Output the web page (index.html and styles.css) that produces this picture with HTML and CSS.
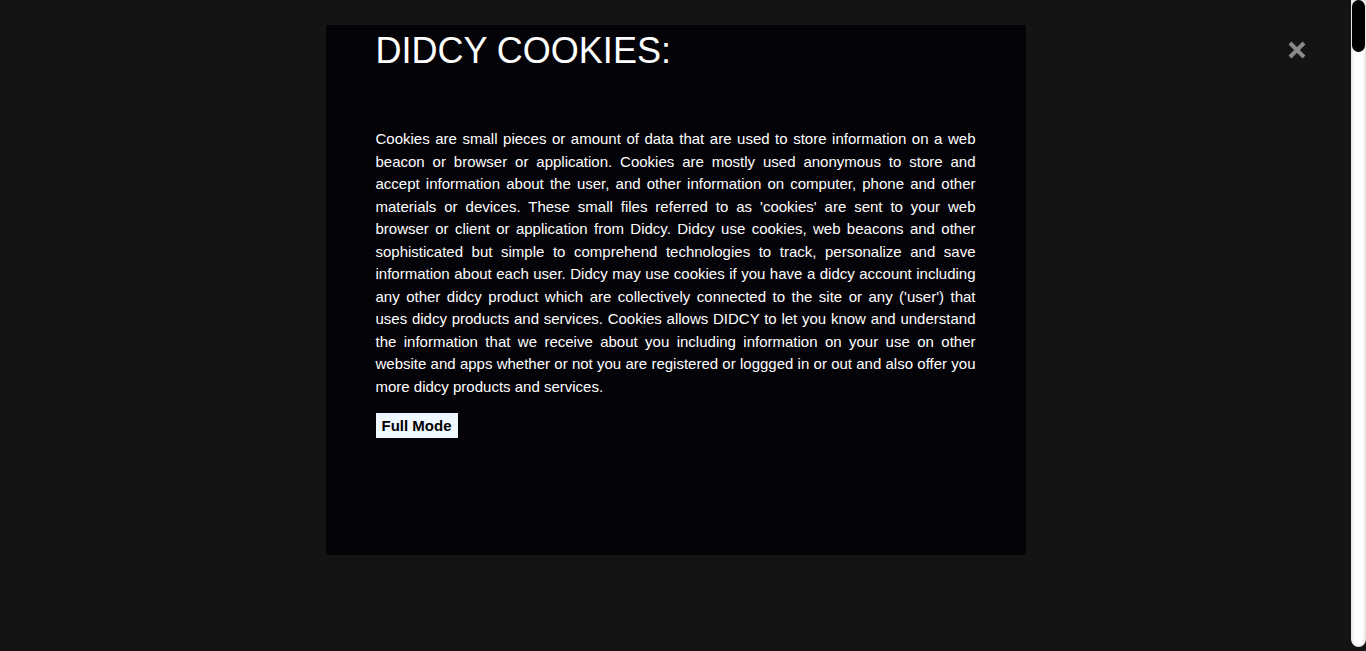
FILE: index.html
```html
<!DOCTYPE html>
<html lang="en">
<head>
<meta charset="utf-8">
<title>Didcy Cookies</title>
<link rel="stylesheet" href="styles.css">
</head>
<body>
<div class="page">
  <button class="close" aria-label="Close">
    <svg width="20" height="20" viewBox="0 0 20 20"><path d="M3 3 L17 17 M17 3 L3 17" stroke="#8a8a8a" stroke-width="4" stroke-linecap="butt"/></svg>
  </button>
  <div class="modal">
    <h1 class="title">DIDCY COOKIES:</h1>
    <p class="text">Cookies are small pieces or amount of data that are used to store information on a web beacon or browser or application. Cookies are mostly used anonymous to store and accept information about the user, and other information on computer, phone and other materials or devices. These small files referred to as 'cookies' are sent to your web browser or client or application from Didcy. Didcy use cookies, web beacons and other sophisticated but simple to comprehend technologies to track, personalize and save information about each user. Didcy may use cookies if you have a didcy account including any other didcy product which are collectively connected to the site or any ('user') that uses didcy products and services. Cookies allows DIDCY to let you know and understand the information that we receive about you including information on your use on other website and apps whether or not you are registered or loggged in or out and also offer you more didcy products and services.</p>
    <button class="full">Full Mode</button>
  </div>
</div>
<div class="scrollbar"><div class="thumb"></div></div>
</body>
</html>
```

FILE: styles.css
```css
html {
  background: #141414;
}
body {
  margin: 0;
  height: 100vh;
  overflow: hidden;
  display: flex;
  font-family: "Liberation Sans", Arial, sans-serif;
  color: #ffffff;
}
.page {
  position: relative;
  flex: 1;
  padding-top: 25px;
}
.scrollbar {
  width: 15px;
  height: 647px;
  background: #ffffff;
  border-radius: 0 0 8px 8px;
  box-shadow: inset 2px 0 3px rgba(0,0,0,0.10), inset -2px 0 3px rgba(0,0,0,0.10);
  display: flex;
  flex-direction: column;
  align-items: center;
}
.thumb {
  width: 13px;
  height: 52px;
  background: #000000;
  border-radius: 7px;
}
.close {
  position: absolute;
  top: 40px;
  right: 44px;
  background: none;
  border: 0;
  padding: 0;
  width: 20px;
  height: 20px;
  cursor: pointer;
}
.close svg {
  display: block;
}
.modal {
  width: 700px;
  height: 530px;
  margin: 0 auto;
  background: #040308;
  box-sizing: border-box;
  padding: 5px 50px 0;
}
.title {
  margin: 0;
  font-size: 36px;
  font-weight: normal;
  line-height: 41px;
}
.text {
  margin: 57px 0 15px;
  font-size: 15px;
  line-height: 22.5px;
  text-align: justify;
}
.full {
  display: block;
  background: #f0f8ff;
  color: #000000;
  border: 0;
  font-family: "Liberation Sans", Arial, sans-serif;
  font-weight: bold;
  font-size: 15px;
  line-height: 17px;
  padding: 4px 6px;
  width: 82px;
  height: 25px;
  text-align: center;
}
```
